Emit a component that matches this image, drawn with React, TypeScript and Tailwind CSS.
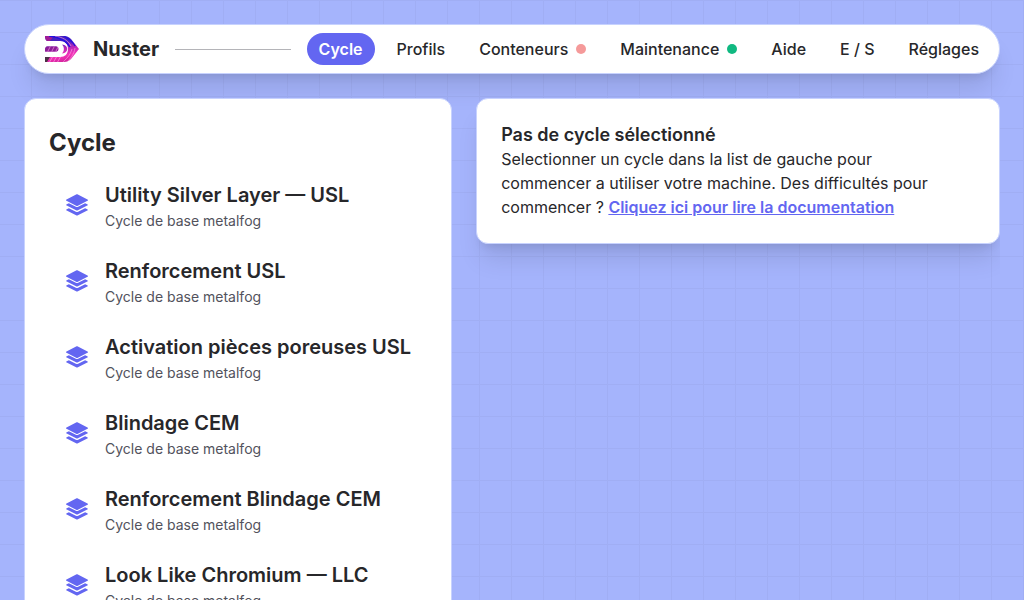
import React from "react";

type Status = "warning" | "ok";

const links: { label: string; active?: boolean; status?: Status }[] = [
  { label: "Cycle", active: true },
  { label: "Profils" },
  { label: "Conteneurs", status: "warning" },
  { label: "Maintenance", status: "ok" },
  { label: "Aide" },
  { label: "E / S" },
  { label: "Réglages" },
];

const cycles = [
  "Utility Silver Layer — USL",
  "Renforcement USL",
  "Activation pièces poreuses USL",
  "Blindage CEM",
  "Renforcement Blindage CEM",
  "Look Like Chromium — LLC",
];

function Logo() {
  return (
    <svg viewBox="0 0 34 26" className="h-[26px] w-[34px] shrink-0" aria-hidden="true">
      <defs>
        <linearGradient id="logo-fill" x1="0.35" y1="0" x2="0.6" y2="1">
          <stop offset="0" stopColor="#4a24b8" />
          <stop offset="0.25" stopColor="#4a22c4" />
          <stop offset="0.5" stopColor="#b828b8" />
          <stop offset="0.75" stopColor="#f434b8" />
          <stop offset="1" stopColor="#d0249c" />
        </linearGradient>
        <clipPath id="logo-shape">
          <path d="M1 0H19C22 0 24 1 26 3L34 13L26 23C24 25 22 26 19 26H0V21H15C20 21 23 18 23 13C23 8 20 5 15 5H3C1 5 0 3 0 0Z" />
          <path d="M2 10.500H11C14.500 10.500 14.500 15.500 11 15.500H0V14C0 12 1 10.500 2 10.500Z" />
          <path d="M17 8.500C24 9 24 17 17 17.500C19.500 15 19.500 11 17 8.500Z" />
        </clipPath>
      </defs>
      <g clipPath="url(#logo-shape)">
        <rect width="34" height="26" fill="url(#logo-fill)" />
        <path d="M0 0H9L4 6H0Z" fill="#a01c98" />
        <path d="M0 10H13V16H0Z" fill="#8c1c98" />
        <path d="M4 0C13 1 21 4 25 11M19 0C24 3 28 6 30 10" fill="none" stroke="#2412e0" strokeWidth="1.300" />
        <g fill="none" stroke="#ffa8e8" strokeWidth="0.8" opacity="0.75">
          <path d="M4 27L8 20M8 27L12 20M12 27L16 20M17 27C21 23 25 20 27 13" />
          <path d="M2 17L6 9M6 17L10 9M10 17L14 9" />
          <path d="M21 27C25 23 29 19 30 12M10 0C17 1 23 4 26 10" />
        </g>
        <path d="M0 21H5L2 26H0Z" fill="#4c3045" />
      </g>
    </svg>
  );
}

function LayersIcon() {
  return (
    <svg viewBox="0 0 24 24" className="size-6 shrink-0 fill-[#6366f1]" aria-hidden="true">
      <path d="M12.400 1.300a1 1 0 0 0-.8 0L1.500 6.500a.7.7 0 0 0 0 1.300l10.100 5.100a1 1 0 0 0 .8 0l10.100-5.100a.7.7 0 0 0 0-1.300z" />
      <path d="M22.300 11.300l-2.200-1-7 3.500a2.500 2.500 0 0 1-2.200 0l-7-3.500-2.200 1a.7.7 0 0 0 0 1.300l9.900 4.800a1 1 0 0 0 .8 0l9.900-4.800a.7.7 0 0 0 0-1.300z" />
      <path d="M22.300 16.300l-2.200-1-7 3.500a2.500 2.500 0 0 1-2.200 0l-7-3.500-2.200 1a.7.7 0 0 0 0 1.300l9.900 4.800a1 1 0 0 0 .8 0l9.900-4.800a.7.7 0 0 0 0-1.300z" />
    </svg>
  );
}

function GridBackground() {
  return (
    <svg className="absolute inset-0 size-full" aria-hidden="true">
      <defs>
        <pattern id="grid" width="32" height="32" patternUnits="userSpaceOnUse">
          <path d="M0 .5H31.500V32" fill="none" stroke="#0f172a" strokeOpacity="0.04" />
        </pattern>
      </defs>
      <rect width="100%" height="100%" fill="url(#grid)" />
    </svg>
  );
}

export default function App() {
  return (
    <div className="relative h-screen overflow-hidden bg-[#a5b4fc] font-['Inter',sans-serif] text-zinc-800">
      <GridBackground />
      <div className="relative flex h-full flex-col gap-6 px-6 pt-6">
        <header className="flex shrink-0 items-center gap-4 rounded-full border border-[#c7d2fe] bg-white py-2 pr-2 pl-5 shadow-xl">
          <div className="flex items-center gap-3.5">
            <Logo />
            <span className="text-xl leading-8 font-bold">Nuster</span>
          </div>
          <div className="h-px flex-1 bg-[#b4b4b8]" />
          <nav className="flex items-center gap-2.5">
            {links.map(({ label, active, status }) => (
              <a
                key={label}
                href="#"
                className={
                  active
                    ? "flex items-center rounded-full bg-[#6366f1] px-3 py-1 font-semibold text-white"
                    : "flex items-center gap-2 rounded-full px-3 py-1 font-medium whitespace-nowrap"
                }
              >
                {label}
                {status && (
                  <span
                    className={
                      status === "ok"
                        ? "size-2.5 rounded-full bg-[#10b981]"
                        : "size-2.5 rounded-full bg-[#f59a9a]"
                    }
                  />
                )}
              </a>
            ))}
          </nav>
        </header>

        <main className="flex min-h-0 flex-1 items-start gap-6 overflow-hidden">
          <section className="shrink-0 rounded-xl border border-[#c7d2fe] bg-white p-6">
            <h1 className="mb-2 pt-1 text-2xl leading-8 font-bold">Cycle</h1>
            <ul className="flex flex-col">
              {cycles.map((name) => (
                <li key={name}>
                  <a href="#" className="flex items-center gap-4 px-4 py-3">
                    <LayersIcon />
                    <div className="whitespace-nowrap">
                      <h2 className="text-xl leading-8 font-semibold">{name}</h2>
                      <p className="text-sm leading-5 text-zinc-600">Cycle de base metalfog</p>
                    </div>
                  </a>
                </li>
              ))}
            </ul>
          </section>

          <section className="min-w-0 flex-1 rounded-xl border border-[#c7d2fe] bg-white p-6 shadow-xl">
            <h2 className="text-lg leading-6 font-semibold">Pas de cycle sélectionné</h2>
            <p className="pr-6 leading-6">
              Selectionner un cycle dans la list de gauche pour commencer a utiliser votre machine. Des difficultés pour
              commencer ?{" "}
              <a href="#" className="font-semibold text-[#6366f1] underline">
                Cliquez ici pour lire la documentation
              </a>
            </p>
          </section>
        </main>
      </div>
    </div>
  );
}
